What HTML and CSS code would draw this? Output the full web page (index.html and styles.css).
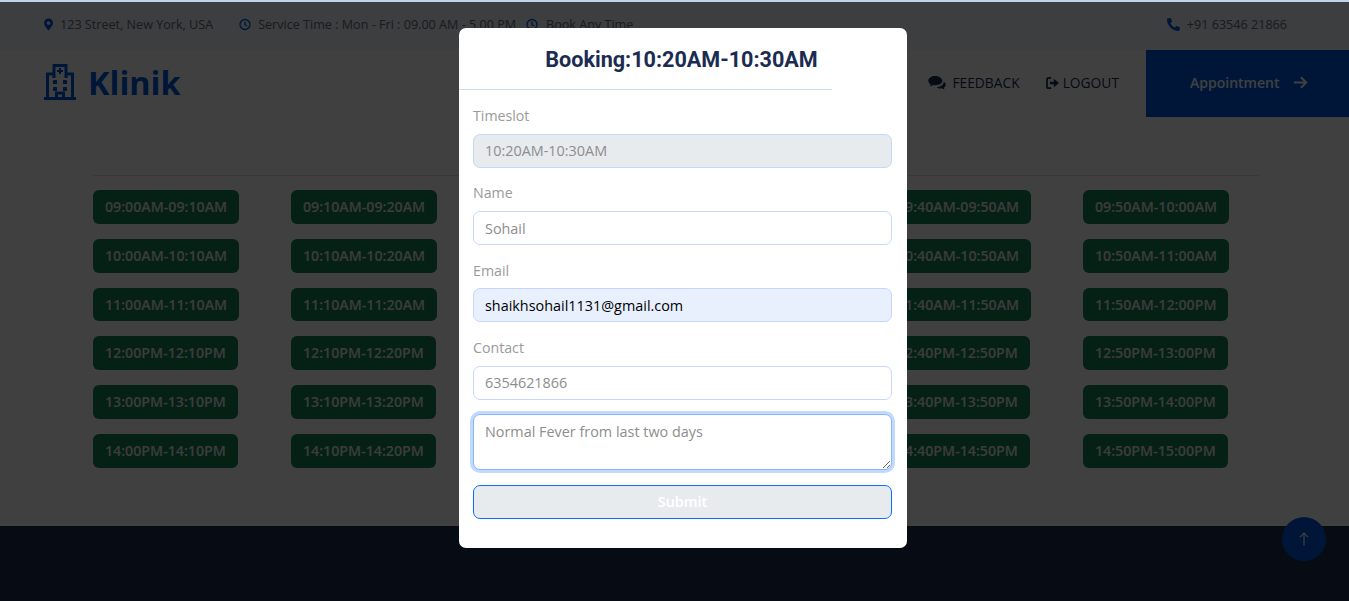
FILE: index.html
```html
<!DOCTYPE html>
<html lang="en">
<head>
    <meta charset="UTF-8">
    <meta name="viewport" content="width=device-width, initial-scale=1.0">
    <title>Klinik - Booking</title>
    <link rel="stylesheet" href="styles.css">
</head>
<body>
    <div class="topbar">
        <div class="topbar-left">
            <span class="topbar-item">
                <svg class="icon icon-pin" viewBox="0 0 384 512"><path d="M172.268 501.67C26.97 291.031 0 269.413 0 192 0 85.961 85.961 0 192 0s192 85.961 192 192c0 77.413-26.97 99.031-172.268 309.67-9.535 13.774-29.93 13.773-39.464 0zM192 272c44.183 0 80-35.817 80-80s-35.817-80-80-80-80 35.817-80 80 35.817 80 80 80z"/></svg>
                123 Street, New York, USA
            </span>
            <span class="topbar-item">
                <svg class="icon icon-line" viewBox="0 0 24 24"><circle cx="12" cy="12" r="10"/><path d="M12 6v6.500l4 2.500"/></svg>
                Service Time : Mon - Fri : 09.00 AM - 5.00 PM
            </span>
            <span class="topbar-item topbar-item-close">
                <svg class="icon icon-line" viewBox="0 0 24 24"><circle cx="12" cy="12" r="10"/><path d="M12 6v6.500l4 2.500"/></svg>
                Book Any Time
            </span>
        </div>
        <span class="topbar-item">
            <svg class="icon icon-phone" viewBox="0 0 512 512"><path d="M497.39 361.8l-112-48a24 24 0 0 0-28 6.9l-49.6 60.6A370.66 370.66 0 0 1 130.6 204.11l60.6-49.6a23.94 23.94 0 0 0 6.9-28l-48-112A24.16 24.16 0 0 0 122.6.61l-104 24A24 24 0 0 0 0 48c0 256.5 207.9 464 464 464a24 24 0 0 0 23.4-18.6l24-104a24.29 24.29 0 0 0-14.01-27.6z"/></svg>
            +91 63546 21866
        </span>
    </div>

    <nav class="navbar">
        <a class="brand" href="#">
            <svg class="brand-icon" viewBox="0 0 32 36">
                <path d="M0 34.500h32M3.500 34V10H10M28.500 34V10H22M10 14V1.500h12V14"/>
                <path class="brand-thin" d="M16 4v6M13 7h6"/>
                <path class="brand-fill" d="M9 16h4v4H9zM19 16h4v4h-4zM9 23h4v4H9zM19 23h4v4h-4z"/>
                <path d="M12.500 34v-5h7v5"/>
            </svg>
            Klinik
        </a>
        <div class="nav-right">
            <a class="nav-link" href="#">
                <svg class="nav-icon" viewBox="0 0 20 16"><path d="M8 0C3.600 0 0 2.400 0 5.400c0 1.700 1.100 3.200 2.900 4.200-.3.800-.8 1.500-1.400 2.100 1.300-.1 2.700-.6 3.800-1.500.9.2 1.800.3 2.700.3 4.400 0 8-2.300 8-5.100S12.400 0 8 0z"/><path d="M17.600 6c.1.300.1.600.1.900 0 3.300-3.500 5.700-8 5.900 1 .9 2.500 1.400 4.100 1.400.6 0 1.200-.1 1.800-.2.8.700 1.900 1.200 3.100 1.300-.5-.5-.9-1.100-1.100-1.800 1.400-.8 2.400-2 2.400-3.400 0-1.600-.9-3-2.400-3.900z"/></svg>
                FEEDBACK
            </a>
            <a class="nav-link nav-link-tight" href="#">
                <svg class="nav-icon nav-icon-small" viewBox="0 0 16 14"><path d="M6 1H3a2 2 0 0 0-2 2v8a2 2 0 0 0 2 2h3" fill="none" stroke="currentColor" stroke-width="2"/><path d="M4.500 5.500H9V2l6 5-6 5V8.500H4.500z"/></svg>
                LOGOUT
            </a>
            <a class="appointment" href="#">
                Appointment
                <svg class="arrow" viewBox="0 0 16 16"><path d="M1 8h13M8.500 2.500 14 8l-5.500 5.500"/></svg>
            </a>
        </div>
    </nav>

    <main class="slots-section">
        <hr class="slots-rule">
        <div class="slots">
            <a class="slot" href="#">09:00AM-09:10AM</a>
            <a class="slot" href="#">09:10AM-09:20AM</a>
            <a class="slot slot-right" href="#">09:40AM-09:50AM</a>
            <a class="slot" href="#">09:50AM-10:00AM</a>
            <a class="slot" href="#">10:00AM-10:10AM</a>
            <a class="slot" href="#">10:10AM-10:20AM</a>
            <a class="slot slot-right" href="#">10:40AM-10:50AM</a>
            <a class="slot" href="#">10:50AM-11:00AM</a>
            <a class="slot" href="#">11:00AM-11:10AM</a>
            <a class="slot" href="#">11:10AM-11:20AM</a>
            <a class="slot slot-right" href="#">11:40AM-11:50AM</a>
            <a class="slot" href="#">11:50AM-12:00PM</a>
            <a class="slot" href="#">12:00PM-12:10PM</a>
            <a class="slot" href="#">12:10PM-12:20PM</a>
            <a class="slot slot-right" href="#">12:40PM-12:50PM</a>
            <a class="slot" href="#">12:50PM-13:00PM</a>
            <a class="slot" href="#">13:00PM-13:10PM</a>
            <a class="slot" href="#">13:10PM-13:20PM</a>
            <a class="slot slot-right" href="#">13:40PM-13:50PM</a>
            <a class="slot" href="#">13:50PM-14:00PM</a>
            <a class="slot" href="#">14:00PM-14:10PM</a>
            <a class="slot" href="#">14:10PM-14:20PM</a>
            <a class="slot slot-right" href="#">14:40PM-14:50PM</a>
            <a class="slot" href="#">14:50PM-15:00PM</a>
        </div>
    </main>

    <footer class="footer"></footer>

    <a class="back-top" href="#">
        <svg class="back-top-arrow" viewBox="0 0 16 20"><path d="M8 18.500V2M2.500 7.500 8 2l5.500 5.500"/></svg>
    </a>

    <div class="backdrop"></div>

    <div class="modal">
        <h2 class="modal-title">Booking:10:20AM-10:30AM</h2>
        <div class="modal-rule"></div>
        <form class="booking-form">
            <div class="field">
                <label for="timeslot">Timeslot</label>
                <input class="input input-disabled" id="timeslot" type="text" value="10:20AM-10:30AM" disabled>
            </div>
            <div class="field">
                <label for="name">Name</label>
                <input class="input" id="name" type="text" placeholder="Sohail">
            </div>
            <div class="field">
                <label for="email">Email</label>
                <input class="input input-autofill" id="email" type="email" value="shaikhsohail1131@gmail.com">
            </div>
            <div class="field">
                <label for="contact">Contact</label>
                <input class="input" id="contact" type="text" placeholder="6354621866">
            </div>
            <textarea class="input textarea" placeholder="Normal Fever from last two days"></textarea>
            <button class="submit" type="button">Submit</button>
        </form>
    </div>
</body>
</html>
```

FILE: styles.css
```css
* {
    box-sizing: border-box;
}
body {
    margin: 0;
    height: 601px;
    overflow: hidden;
    font-family: "Open Sans", sans-serif;
    font-size: 14px;
    color: #6b6a75;
    background-color: #fff;
    border-top: 2px solid #c4d2ea;
    display: flex;
    flex-direction: column;
}
a {
    text-decoration: none;
    color: inherit;
}

/* top info bar */
.topbar {
    height: 48px;
    padding: 0 62px 4px 44px;
    display: flex;
    align-items: center;
    justify-content: space-between;
    font-size: 12.6px;
    background-color: #eff5ff;
}
.topbar-left {
    display: flex;
    gap: 26px;
}
.topbar-item {
    display: flex;
    align-items: center;
    gap: 7px;
}
.topbar-item-close {
    margin-left: -16px;
    gap: 8px;
}
.icon {
    height: 13px;
    width: 12px;
    fill: #005ae0;
}
.icon-pin {
    width: 9px;
}
.icon-phone {
    width: 13px;
}
.icon-line {
    fill: none;
    stroke: #005ae0;
    stroke-width: 2.6;
}

/* main nav */
.navbar {
    height: 67px;
    padding-left: 44px;
    display: flex;
    align-items: center;
    justify-content: space-between;
    background-color: #fff;
}
.brand {
    display: flex;
    align-items: center;
    gap: 12px;
    padding-bottom: 4px;
    font-size: 32.4px;
    font-weight: 700;
    color: #005ae0;
}
.brand-icon {
    width: 32px;
    height: 36px;
    fill: none;
    stroke: #005ae0;
    stroke-width: 3;
}
.brand-thin {
    stroke-width: 2;
}
.brand-fill {
    fill: #005ae0;
    stroke: none;
}
.nav-right {
    display: flex;
    align-items: center;
    height: 100%;
}
.nav-link {
    display: flex;
    align-items: center;
    gap: 6px;
    margin-right: 26px;
    padding-bottom: 2px;
    font-size: 13.8px;
    color: #1b2c51;
}
.nav-link-tight {
    gap: 3px;
    margin-right: 27px;
}
.nav-icon {
    width: 18px;
    height: 14px;
    fill: currentColor;
}
.nav-icon-small {
    width: 14px;
    height: 12px;
}
.appointment {
    width: 203px;
    height: 100%;
    padding: 0 0 2px 44px;
    display: flex;
    align-items: center;
    gap: 14px;
    font-weight: 600;
    color: #fff;
    background-color: #005ae0;
}
.arrow {
    width: 15px;
    height: 15px;
    fill: none;
    stroke: #fff;
    stroke-width: 2.2;
}

/* slots */
.slots-section {
    flex: 1;
    padding: 58px 90px 0 93px;
}
.slots-rule {
    margin: 0 0 14px;
    border: none;
    border-top: 1px solid #e2e4e8;
}
.slots {
    display: grid;
    grid-template-columns: repeat(6, 198px);
    grid-auto-rows: 33.8px;
    row-gap: 15px;
    justify-items: start;
}
.slot {
    padding: 0 12px;
    line-height: 33.8px;
    font-size: 14.2px;
    font-weight: 600;
    color: #eee;
    background-color: #16825a;
    border-radius: 6px;
}
.slot-right {
    grid-column-start: 5;
}

.footer {
    height: 75px;
    background-color: #1b2c51;
}
.back-top {
    position: absolute;
    left: 1282px;
    top: 517px;
    width: 44px;
    height: 44px;
    border-radius: 50%;
    background-color: #005ae0;
    display: flex;
    align-items: center;
    justify-content: center;
}
.back-top-arrow {
    width: 12px;
    height: 16px;
    fill: none;
    stroke: #fff;
    stroke-width: 1.5;
}

/* modal */
.backdrop {
    position: fixed;
    top: 2px;
    left: 0;
    right: 0;
    bottom: 0;
    background-color: rgba(0, 0, 0, 0.75);
}
.modal {
    position: absolute;
    left: 459px;
    top: 28px;
    width: 448px;
    height: 520px;
    background-color: #fff;
    border-radius: 7px;
}
.modal-title {
    margin: 0;
    padding: 16px 3px 0 0;
    height: 61px;
    text-align: center;
    font-family: Roboto, sans-serif;
    font-size: 21.6px;
    font-weight: 700;
    line-height: 31px;
    color: #1b2c51;
}
.modal-rule {
    width: 373px;
    border-top: 1px solid #ccdcf7;
}
.booking-form {
    padding: 15.1px 15px 0 14px;
}
.field {
    margin-bottom: 14.5px;
}
label {
    display: block;
    line-height: 21px;
    margin-bottom: 7.8px;
    font-size: 14.2px;
    color: #9a9a9a;
}
.input {
    display: block;
    width: 100%;
    height: 34px;
    padding: 0 11px;
    font-family: "Open Sans", sans-serif;
    font-size: 14.4px;
    border: 1px solid #c5d8fb;
    border-radius: 7px;
    background-color: #fff;
    outline: none;
}
.input::placeholder {
    color: #8d8d8d;
    opacity: 1;
}
.input-disabled {
    color: #8d8d8d;
    background-color: #e8ebee;
}
.input-autofill {
    color: #000;
    background-color: #e8f0fe;
}
.textarea {
    height: 56px;
    padding: 6px 11px;
    line-height: 21px;
    border-color: #86b7fe;
    box-shadow: 0 0 0 3px #c2d9fe;
}
.submit {
    display: block;
    width: 100%;
    height: 34px;
    margin-top: 15px;
    padding: 0 0 1px;
    font-family: "Open Sans", sans-serif;
    font-size: 14.4px;
    font-weight: 600;
    color: #fff;
    background-color: #e8ebee;
    border: 1px solid #0d6efd;
    border-radius: 7px;
}
```
